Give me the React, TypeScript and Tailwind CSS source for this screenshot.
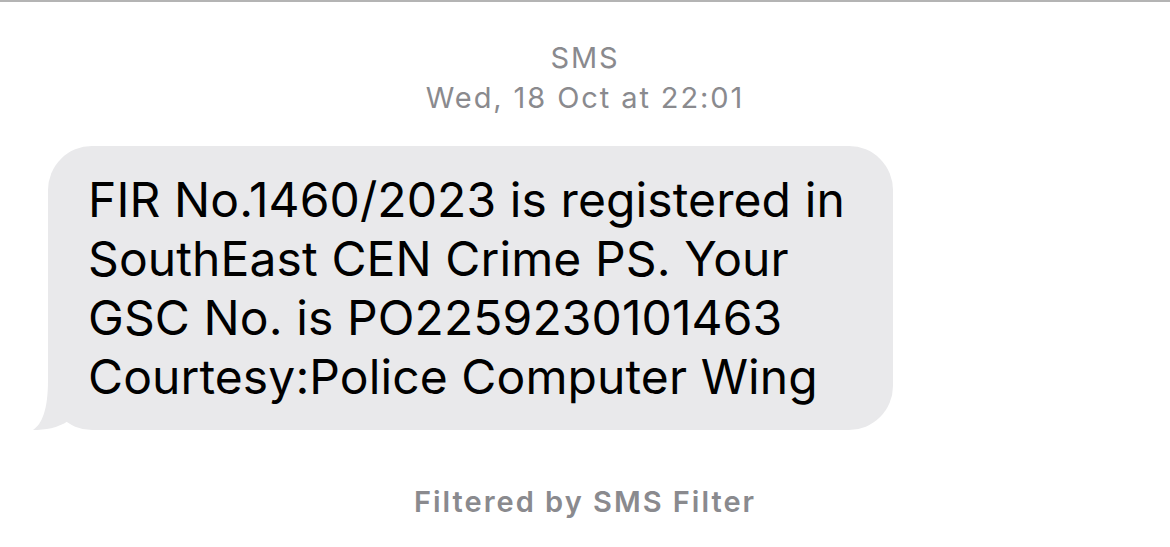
import React from "react";

export default function App() {
  return (
    <div className="w-[1170px] h-[547px] bg-white overflow-hidden border-t-2 border-[#b4b4b4]" style={{ fontFamily: "Inter, 'Noto Sans', sans-serif" }}>
      <div className="flex flex-col items-center pt-[36px] text-[#8a8a8e] text-[29px] leading-[40px] tracking-[1.9px]">
        <div>SMS</div>
        <div>Wed, 18 Oct at 22:01</div>
      </div>
      <div className="mt-[28px] ml-[48px] relative w-[845px]">
        <svg className="absolute left-[-16px] bottom-0" width="60" height="55" viewBox="0 0 60 55">
          <path d="M16 5 C16 35 10 49 1 55 C13 55 26 53 36 46 L48 25 L28 5 Z" fill="#e9e9eb" />
        </svg>
        <div className="relative bg-[#e9e9eb] rounded-[44px] pl-[40px] pt-[24px] pb-[24px] text-black text-[48px] leading-[59px] tracking-[0.1px]">
          FIR No.1460/2023 is registered in<br />
          SouthEast CEN Crime PS. Your<br />
          GSC No. is PO2259230101463<br />
          Courtesy:Police Computer Wing
        </div>
      </div>
      <div className="mt-[52px] flex justify-center text-[#8a8a8e] text-[29px] leading-[40px] font-semibold tracking-[2px]">
        Filtered by SMS Filter
      </div>
    </div>
  );
}
